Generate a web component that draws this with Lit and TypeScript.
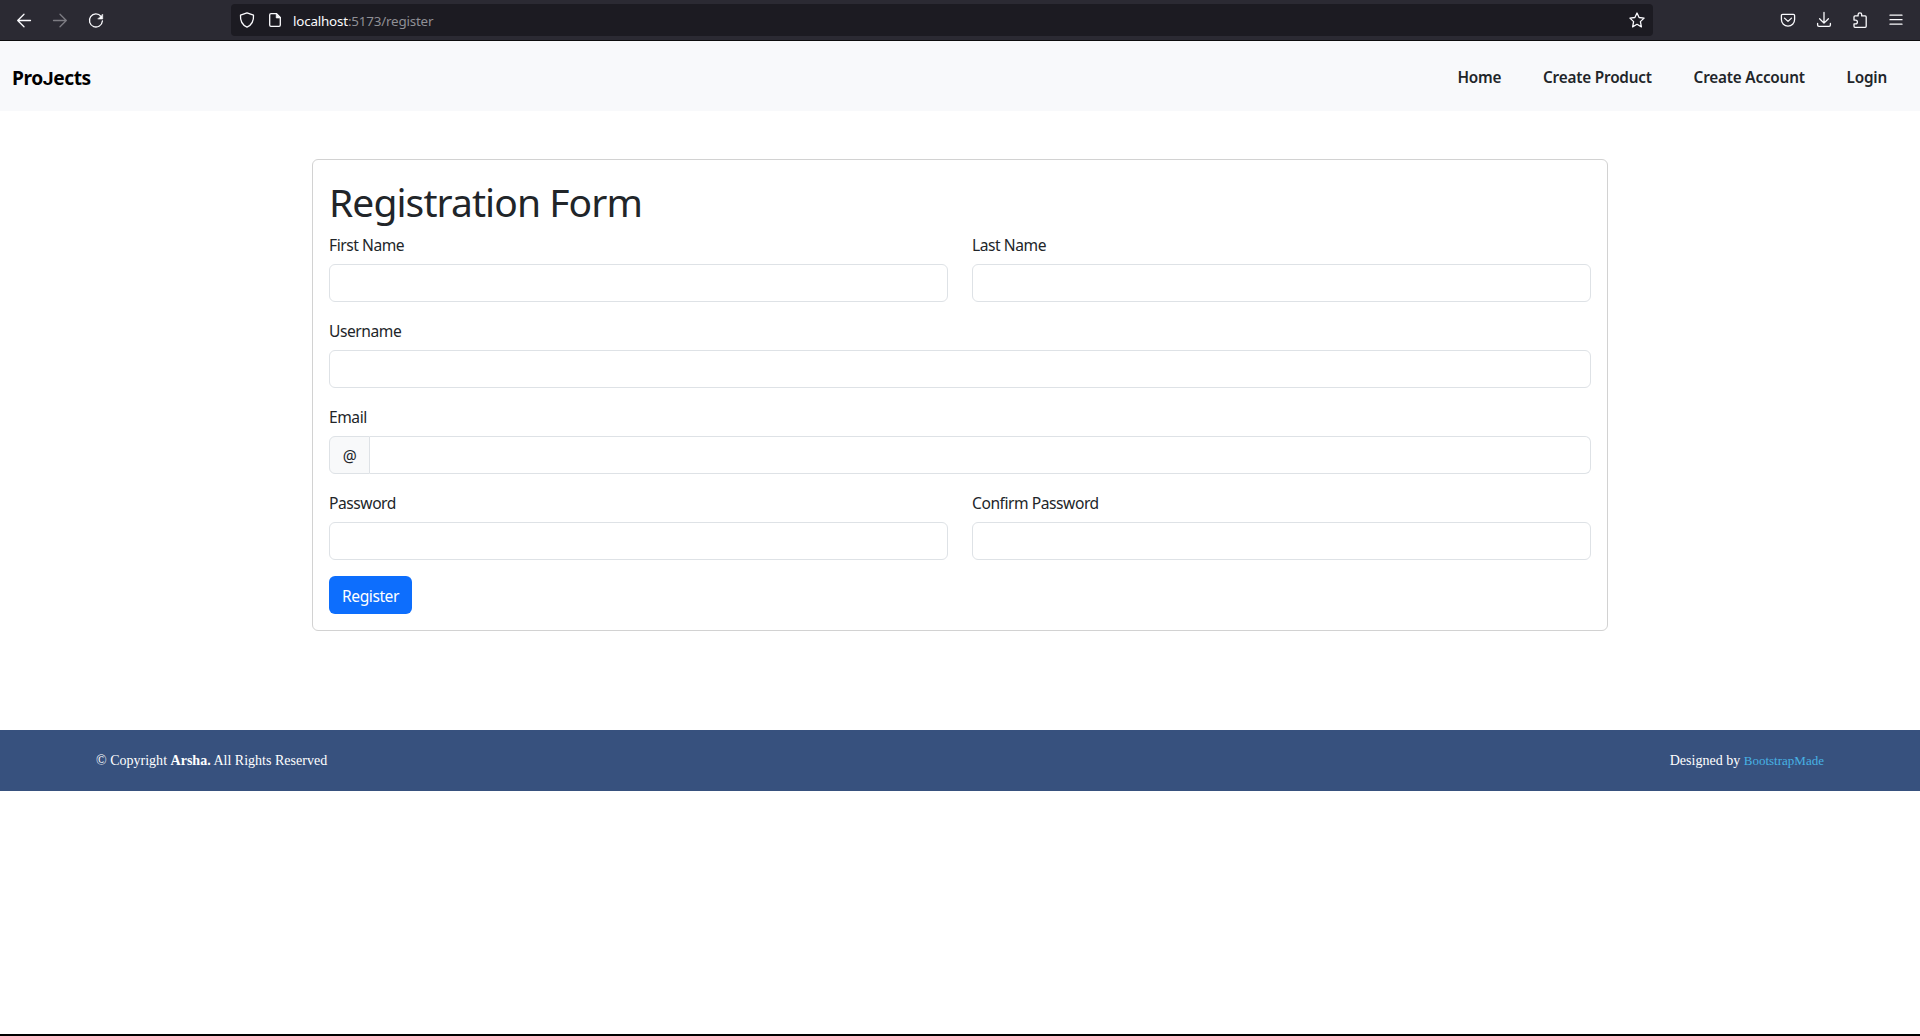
import { LitElement, html, css, svg } from "lit";
import { customElement, property } from "lit/decorators.js";

const icons = {
  back: svg`<path d="M8 2.2 1.7 8.5 8 14.8M1.7 8.5H14.5"/>`,
  forward: svg`<path d="M8 2.2 14.3 8.5 8 14.8M14.3 8.5H1.5"/>`,
  reload: svg`<path d="M13 4.4A6.5 6.5 0 1 0 14.4 9"/><path class="solid" d="M14.7 2.4V7H10.1Z"/>`,
  shield: svg`<path d="M8 .9 14.5 3.2C14.9 8.6 12.8 12.8 8 15.2 3.2 12.8 1.1 8.6 1.5 3.2Z"/>`,
  page: svg`<path d="M9.6 1.7H4Q2.7 1.7 2.7 3V13Q2.7 14.3 4 14.3H12Q13.3 14.3 13.3 13V5.4Z"/><path class="solid" d="M9.2 1.7V6H13.6Z"/>`,
  star: svg`<path d="M8 1 10.1 5.5 15.1 6.1 11.4 9.6 12.4 14.9 8 12.3 3.6 14.9 4.6 9.6 .9 6.1 5.9 5.5Z"/>`,
  pocket: svg`<path d="M2.6 2.4H13.4Q14.6 2.4 14.6 3.6V7.5A6.6 6.6 0 0 1 1.4 7.5V3.6Q1.4 2.4 2.6 2.4ZM4.5 6.1 8 9.4 11.5 6.1"/>`,
  download: svg`<path d="M8 .5V11M3.6 6.8 8 11.1 12.4 6.8M1.6 11.5V13Q1.6 14.4 3 14.4H13Q14.4 14.4 14.4 13V11.5"/>`,
  extension: svg`<path d="M2 6.2V4.9Q2 3.9 3 3.9H6.1V2.6A1.8 1.8 0 0 1 9.7 2.6V3.9H13.2Q14.2 3.9 14.2 4.9V14.3Q14.2 15.3 13.2 15.3H3Q2 15.3 2 14.3V11.9H3.5A1.9 1.9 0 0 0 3.5 8.1H2Z"/>`,
  menu: svg`<path d="M2 3.2H14M2 7.7H14M2 12.2H14"/>`,
};

@customElement("line-icon")
class LineIcon extends LitElement {
  @property() name: keyof typeof icons = "back";
  static styles = css`
    :host { display: block; width: 16px; height: 16px; flex: none; }
    .icon { display: block; width: 16px; height: 16px; fill: none; stroke: currentColor;
      stroke-width: 1.3; stroke-linecap: round; stroke-linejoin: round; overflow: visible; }
    .solid { fill: currentColor; stroke-width: 0.6; }
  `;
  render() {
    return html`<svg class="icon" viewBox="0 0 16 16">${icons[this.name]}</svg>`;
  }
}

@customElement("browser-bar")
class BrowserBar extends LitElement {
  static styles = css`
    :host { display: block; }
    .bar { box-sizing: border-box; height: 41px; display: flex; align-items: center;
      background: #2b2a33; border-bottom: 1px solid #0c0c0d; color: #fbfbfe; padding: 0 16px; }
    .history { display: flex; gap: 20px; width: 215px; }
    .off { color: #7d7c83; }
    .address { box-sizing: border-box; width: 1422px; height: 32px; border-radius: 4px; background: #1c1b22;
      display: flex; align-items: center; padding: 0 8px; gap: 12px; }
    .url { flex: 1; color: #8f8f95; font: 13.4px/18px "Noto Sans", sans-serif; letter-spacing: -0.19px;
      padding-top: 2px; margin-left: -2px; }
    .host { color: #fbfbfe; }
    .tools { display: flex; gap: 20px; margin-left: auto; }
  `;
  render() {
    return html`<div class="bar">
      <div class="history">
        <line-icon name="back"></line-icon>
        <line-icon name="forward" class="off"></line-icon>
        <line-icon name="reload"></line-icon>
      </div>
      <div class="address">
        <line-icon name="shield"></line-icon>
        <line-icon name="page"></line-icon>
        <div class="url"><span class="host">localhost</span>:5173/register</div>
        <line-icon name="star"></line-icon>
      </div>
      <div class="tools">
        <line-icon name="pocket"></line-icon>
        <line-icon name="download"></line-icon>
        <line-icon name="extension"></line-icon>
        <line-icon name="menu"></line-icon>
      </div>
    </div>`;
  }
}

@customElement("registration-form")
class RegistrationForm extends LitElement {
  static styles = css`
    :host { display: block; }
    .card { box-sizing: border-box; width: 1296px; margin: 0 auto; padding: 16px;
      border: 1px solid #d2d2d2; border-radius: 6px; background: #fff; }
    .title { box-sizing: border-box; height: 48px; margin: 0 0 8px; padding-top: 2px; font-size: 39px; line-height: 48px;
      font-weight: 400; letter-spacing: -0.92px; }
    .fields { display: grid; grid-template-columns: 1fr 1fr; gap: 16px 24px; }
    .wide { grid-column: 1 / -1; }
    .label { display: block; box-sizing: border-box; height: 24px; padding-top: 1px; line-height: 24px; margin-bottom: 8px; }
    .input { box-sizing: border-box; display: block; width: 100%; height: 38px; border: 1px solid #dee2e6;
      border-radius: 6px; background: #fff; padding: 6px 12px; font: inherit; outline: 0; }
    .group { display: flex; }
    .addon { box-sizing: border-box; width: 41px; height: 38px; border: 1px solid #dee2e6; border-radius: 6px 0 0 6px;
      background: #f8f9fa; line-height: 39px; text-align: center; }
    .joined { flex: 1; width: auto; border-left: 0; border-radius: 0 6px 6px 0; }
    .submit { display: block; width: 83px; height: 38px; margin-top: 16px; padding: 1px 0 0; border: 0; border-radius: 6px;
      background: #0d6efd; color: #fff; font: inherit; letter-spacing: inherit; }
  `;
  private field(label: string, type = "text", wide = false) {
    return html`<label class=${wide ? "wide" : ""}>
      <span class="label">${label}</span><input class="input" type=${type} /></label>`;
  }
  render() {
    return html`<form class="card">
      <h1 class="title">Registration Form</h1>
      <div class="fields">
        ${this.field("First Name")}${this.field("Last Name")}
        ${this.field("Username", "text", true)}
        <label class="wide"><span class="label">Email</span>
          <span class="group"><span class="addon">@</span><input class="input joined" type="email" /></span>
        </label>
        ${this.field("Password", "password")}${this.field("Confirm Password", "password")}
      </div>
      <button class="submit" type="button">Register</button>
    </form>`;
  }
}

@customElement("app-root")
class AppRoot extends LitElement {
  static styles = css`
    :host { display: flex; flex-direction: column; box-sizing: border-box; height: 1036px; background: #fff;
      border-bottom: 2px solid #000; color: #212529; font: 15.6px/24px "Noto Sans", sans-serif; letter-spacing: -0.45px; }
    .nav { box-sizing: border-box; height: 70px; background: #f8f9fb; display: flex; align-items: center;
      justify-content: space-between; padding: 2px 33px 0 12px; letter-spacing: -0.2px; }
    .brand { font-size: 19.2px; font-weight: 700; color: #000; padding-top: 2px; letter-spacing: -0.42px; }
    .initial { font-family: Roboto, sans-serif; }
    .links { display: flex; gap: 41.8px; font-size: 15.3px; font-weight: 600; }
    .main { padding: 48px 0 99px; }
    .footer { box-sizing: border-box; height: 61px; display: flex; align-items: center; justify-content: space-between;
      padding: 0 96px; background: #37517e; color: #fff; font: 14px/21px "Liberation Serif", serif; letter-spacing: 0.01px; }
    .link { font-size: 13px; color: #47b2e4; }
  `;
  render() {
    return html`
      <browser-bar></browser-bar>
      <nav class="nav">
        <div class="brand">Pro<span class="initial">J</span>ects</div>
        <div class="links"><span>Home</span><span>Create Product</span><span>Create Account</span><span>Login</span></div>
      </nav>
      <main class="main"><registration-form></registration-form></main>
      <footer class="footer">
        <div>© Copyright <strong>Arsha.</strong> All Rights Reserved</div>
        <div>Designed by <span class="link">BootstrapMade</span></div>
      </footer>`;
  }
}
